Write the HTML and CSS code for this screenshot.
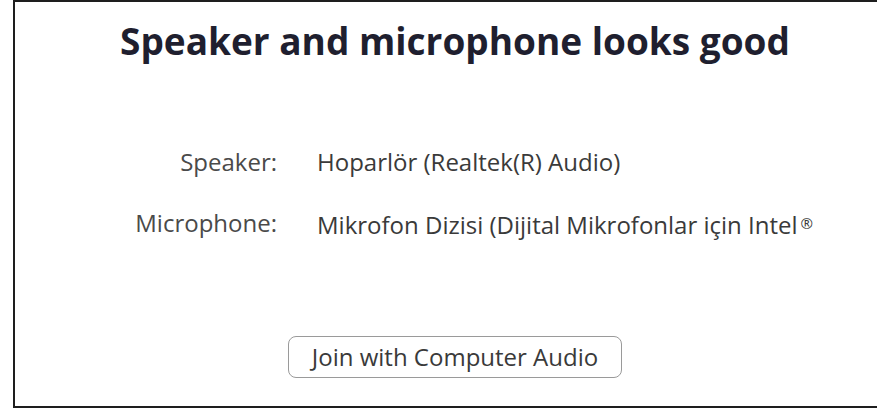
FILE: index.html
```html
<!DOCTYPE html>
<html lang="en">
<head>
<meta charset="utf-8">
<title>Audio check</title>
<link rel="stylesheet" href="styles.css">
</head>
<body>
<div class="panel">
  <div class="content">
    <h1 class="title">Speaker and microphone looks good</h1>
    <div class="devices">
      <div class="label">Speaker:</div>
      <div class="value">Hoparlör (Realtek(R) Audio)</div>
      <div class="label">Microphone:</div>
      <div class="value">Mikrofon Dizisi (Dijital Mikrofonlar için Intel<span class="reg">®</span></div>
    </div>
    <div class="actions">
      <button class="join" type="button">Join with Computer Audio</button>
    </div>
  </div>
</div>
</body>
</html>
```

FILE: styles.css
```css
html, body {
  margin: 0;
  padding: 0;
  background: #ffffff;
  overflow: hidden;
}

body {
  font-family: "Open Sans", "Noto Sans", sans-serif;
}

.panel {
  box-sizing: border-box;
  margin-left: 13px;
  width: 864px;
  height: 408px;
  border-top: 2px solid #1e1e1e;
  border-left: 2px solid #1e1e1e;
  border-bottom: 2px solid #1e1e1e;
  overflow: hidden;
}

.content {
  width: 880px;
  display: flex;
  flex-direction: column;
}

.title {
  margin: 19px 0 0;
  font-size: 37px;
  line-height: 40px;
  font-weight: 700;
  color: #1f1f2f;
  text-align: center;
}

.devices {
  margin-top: 86px;
  display: grid;
  grid-template-columns: 262px 1fr;
  column-gap: 40px;
  row-gap: 31px;
  font-size: 24px;
  line-height: 30px;
}

.label {
  text-align: right;
  color: #4a4a4a;
}

.value {
  color: #3a3a3a;
  white-space: nowrap;
}

.reg {
  font-size: 15px;
  vertical-align: 5px;
  margin-left: 3px;
}

.actions {
  margin-top: 96px;
  display: flex;
  justify-content: center;
}

.join {
  box-sizing: border-box;
  width: 334px;
  height: 42px;
  padding: 0;
  border: 1.5px solid #9a9a9a;
  border-radius: 8px;
  background: #ffffff;
  font-family: inherit;
  font-size: 24px;
  line-height: 30px;
  color: #3a3a3a;
}
```
